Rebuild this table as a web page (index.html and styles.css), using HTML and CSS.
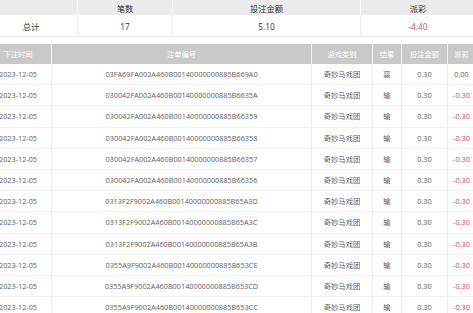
FILE: index.html
```html
<!DOCTYPE html>
<html lang="zh-CN">
<head>
<meta charset="utf-8">
<link rel="stylesheet" href="styles.css">
</head>
<body>
<div class="page">
  <div class="summary">
    <div class="srow shead">
      <div class="c"></div><div class="c">笔数</div><div class="c">投注金额</div><div class="c">派彩</div>
    </div>
    <div class="srow sbody">
      <div class="c">总计</div><div class="c">17</div><div class="c">5.10</div><div class="c neg">-4.40</div>
    </div>
  </div>

  <div class="list">
    <div class="row head">
      <div class="c">下注时间</div><div class="c">注单编号</div><div class="c">游戏类别</div><div class="c">结果</div><div class="c">投注金额</div><div class="c">派彩</div>
    </div>
    <div class="row"><div class="c">2023-12-05</div><div class="c">03FA69FA002A460B00140000000885B669A0</div><div class="c">奇妙马戏团</div><div class="c">赢</div><div class="c">0.30</div><div class="c">0.00</div></div>
    <div class="row"><div class="c">2023-12-05</div><div class="c">030042FA002A460B00140000000885B6635A</div><div class="c">奇妙马戏团</div><div class="c">输</div><div class="c">0.30</div><div class="c neg">-0.30</div></div>
    <div class="row"><div class="c">2023-12-05</div><div class="c">030042FA002A460B00140000000885B66359</div><div class="c">奇妙马戏团</div><div class="c">输</div><div class="c">0.30</div><div class="c neg">-0.30</div></div>
    <div class="row"><div class="c">2023-12-05</div><div class="c">030042FA002A460B00140000000885B66358</div><div class="c">奇妙马戏团</div><div class="c">输</div><div class="c">0.30</div><div class="c neg">-0.30</div></div>
    <div class="row"><div class="c">2023-12-05</div><div class="c">030042FA002A460B00140000000885B66357</div><div class="c">奇妙马戏团</div><div class="c">输</div><div class="c">0.30</div><div class="c neg">-0.30</div></div>
    <div class="row"><div class="c">2023-12-05</div><div class="c">030042FA002A460B00140000000885B66356</div><div class="c">奇妙马戏团</div><div class="c">输</div><div class="c">0.30</div><div class="c neg">-0.30</div></div>
    <div class="row"><div class="c">2023-12-05</div><div class="c">0313F2F9002A460B00140000000885B65A3D</div><div class="c">奇妙马戏团</div><div class="c">输</div><div class="c">0.30</div><div class="c neg">-0.30</div></div>
    <div class="row"><div class="c">2023-12-05</div><div class="c">0313F2F9002A460B00140000000885B65A3C</div><div class="c">奇妙马戏团</div><div class="c">输</div><div class="c">0.30</div><div class="c neg">-0.30</div></div>
    <div class="row"><div class="c">2023-12-05</div><div class="c">0313F2F9002A460B00140000000885B65A3B</div><div class="c">奇妙马戏团</div><div class="c">输</div><div class="c">0.30</div><div class="c neg">-0.30</div></div>
    <div class="row"><div class="c">2023-12-05</div><div class="c">0355A9F9002A460B00140000000885B653CE</div><div class="c">奇妙马戏团</div><div class="c">输</div><div class="c">0.30</div><div class="c neg">-0.30</div></div>
    <div class="row"><div class="c">2023-12-05</div><div class="c">0355A9F9002A460B00140000000885B653CD</div><div class="c">奇妙马戏团</div><div class="c">输</div><div class="c">0.30</div><div class="c neg">-0.30</div></div>
    <div class="row"><div class="c">2023-12-05</div><div class="c">0355A9F9002A460B00140000000885B653CC</div><div class="c">奇妙马戏团</div><div class="c">输</div><div class="c">0.30</div><div class="c neg">-0.30</div></div>
  </div>
</div>
</body>
</html>
```

FILE: styles.css
```css
html, body {
  margin: 0;
  padding: 0;
  background: #ffffff;
  overflow: hidden;
}
body {
  width: 473px;
  height: 313px;
  font-family: "Open Sans", "Noto Sans CJK SC", sans-serif;
}
.page {
  margin-left: -15px;
  width: 491px;
  display: flex;
  flex-direction: column;
  gap: 7px;
}
.summary {
  display: flex;
  flex-direction: column;
}
.srow {
  display: grid;
  grid-template-columns: 93px 95px 188px 115px;
  border-bottom: 1px solid #ebebeb;
  box-sizing: border-box;
}
.srow .c {
  display: flex;
  align-items: center;
  justify-content: center;
  border-right: 1px solid #ebebeb;
  font-size: 8.3px;
  color: #333333;
}
.shead {
  height: 16px;
  background: #ebebeb;
  border-bottom-color: #ffffff;
}
.shead .c {
  border-right-color: #ffffff;
}
.sbody {
  height: 21px;
}
.list {
  display: flex;
  flex-direction: column;
}
.row {
  display: grid;
  grid-template-columns: 67px 260px 61px 29px 46px 28px;
  height: 21.2px;
  box-sizing: border-box;
  border-bottom: 1px solid #f0f0f0;
}
.row .c {
  display: flex;
  align-items: center;
  justify-content: center;
  border-right: 1px solid #ebebeb;
  font-size: 7.3px;
  color: #5e5e5e;
  white-space: nowrap;
}
.row.head {
  height: 20px;
  background: #c9c9c9;
  border-bottom: none;
}
.row.head .c {
  color: #ffffff;
  border-right-color: #f2f2f2;
}
.neg {
  color: #cf4b63 !important;
}
```
